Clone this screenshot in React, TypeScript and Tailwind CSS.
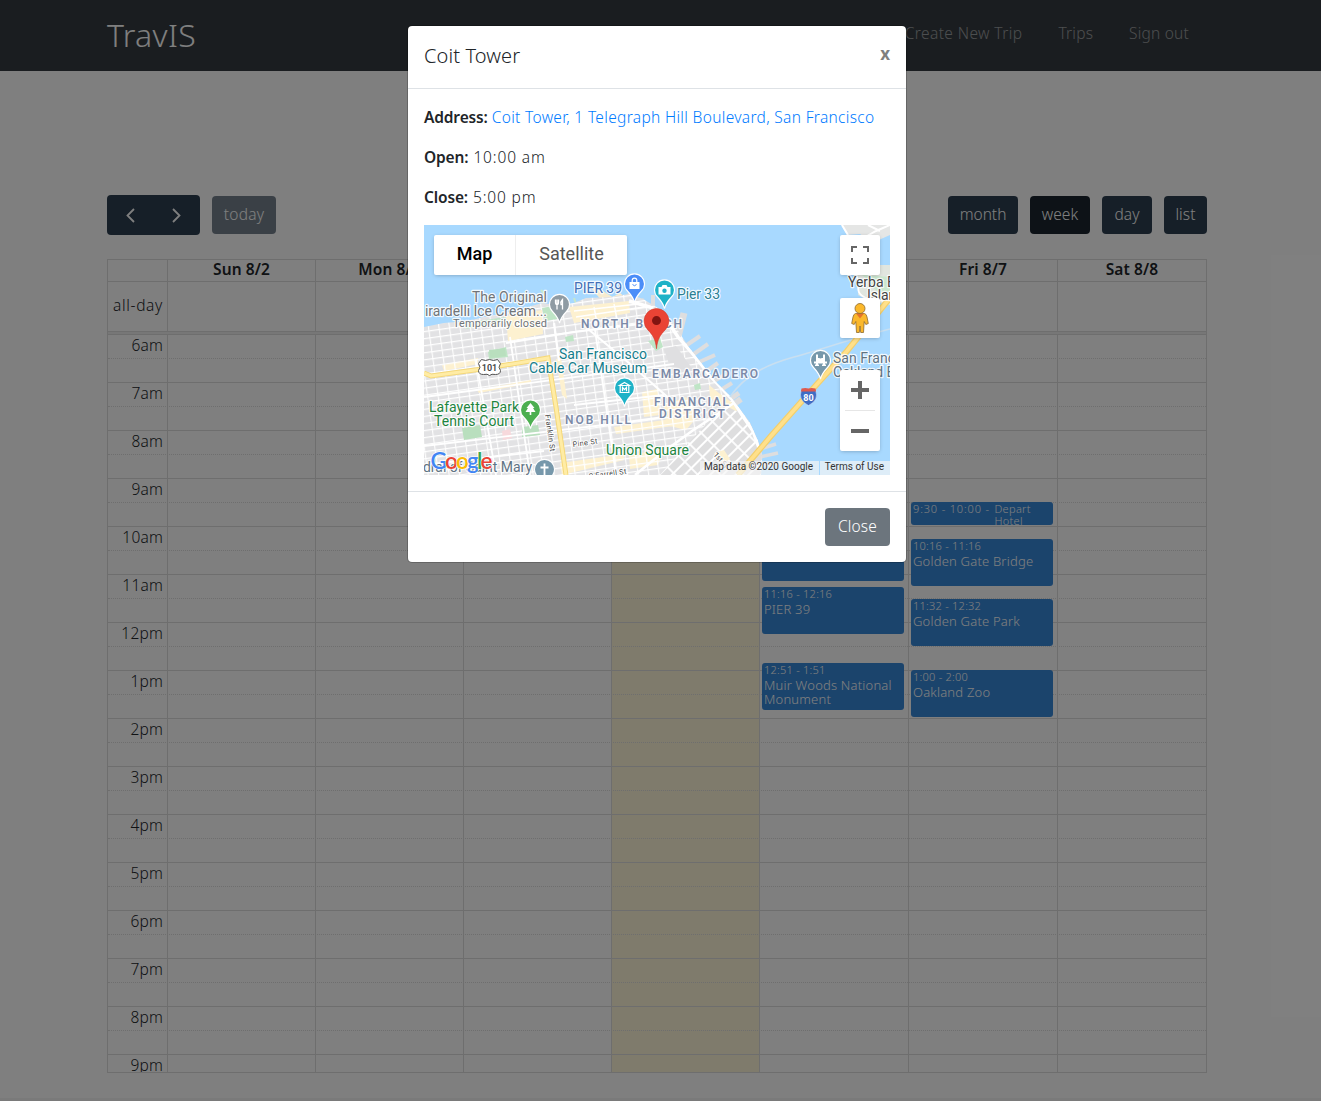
import React from "react";

const hours = ["6am", "7am", "8am", "9am", "10am", "11am", "12pm", "1pm", "2pm", "3pm", "4pm", "5pm", "6pm", "7pm", "8pm", "9pm"];
const days = ["Sun 8/2", "Mon 8/3", "Tue 8/4", "Wed 8/5", "Thu 8/6", "Fri 8/7", "Sat 8/8"];
const COLS = "grid grid-cols-[60px_148px_148px_148px_148px_149px_149px_149px]";

type Ev = { top: number; height?: number; time: string; title: string };
const events: Record<number, Ev[]> = {
  4: [
    { top: 200, time: "10:00 - 11:00", title: "Coit Tower" },
    { top: 253, time: "11:16 - 12:16", title: "PIER 39" },
    { top: 329, time: "12:51 - 1:51", title: "Muir Woods National Monument" },
  ],
  5: [
    { top: 168, height: 23, time: "9:30 - 10:00", title: "Depart Hotel" },
    { top: 205, time: "10:16 - 11:16", title: "Golden Gate Bridge" },
    { top: 265, time: "11:32 - 12:32", title: "Golden Gate Park" },
    { top: 336, time: "1:00 - 2:00", title: "Oakland Zoo" },
  ],
};

function EventBox({ e }: { e: Ev }) {
  const short = e.height !== undefined;
  return (
    <div
      className="absolute left-[2px] w-[142px] overflow-hidden rounded-[3px] bg-[#3788d8] px-[2px] text-white"
      style={{ top: e.top, height: e.height ?? 47 }}
    >
      {short ? (
        <div className="flex pt-px text-[11px] leading-[12px]">
          <span className="w-[81.5px] shrink-0 whitespace-pre tracking-[0.85px]">{e.time} - </span>
          <span className="w-10 tracking-[0.3px]">{e.title}</span>
        </div>
      ) : (
        <>
          <div className="text-[11px] leading-[13px] tracking-[0.25px]">{e.time}</div>
          <div className="pt-[2px] text-[13px] leading-[14px] tracking-[0.2px]">{e.title}</div>
        </>
      )}
    </div>
  );
}

function Calendar() {
  return (
    <div className="mt-6 w-[1100px] border border-[#ddd] text-[#212529]">
      <div className={`${COLS} -ml-px h-[21px]`}>
        <div />
        {days.map((d) => (
          <div key={d} className="border-l border-[#ddd] text-center font-semibold leading-[19px] tracking-[0.1px]">{d}</div>
        ))}
      </div>
      <div className={`${COLS} -ml-px h-[50px] border-t border-[#ddd]`}>
        <div className="pr-1 text-right leading-[47px] tracking-[0.65px]">all-day</div>
        {days.map((d) => (
          <div key={d} className={d === "Wed 8/5" ? "border-l border-[#ddd] bg-[#fff6d8]" : "border-l border-[#ddd]"} />
        ))}
      </div>
      <div className="h-[3px] border-t border-[#ddd] bg-[#eee]" />
      <div className="relative h-[738px] overflow-hidden">
        <div className={`absolute inset-0 -left-px ${COLS}`}>
          <div />
          {days.map((d) => (
            <div key={d} className={d === "Wed 8/5" ? "border-l border-[#ddd] bg-[#fff6d8]" : "border-l border-[#ddd]"} />
          ))}
        </div>
        <div className="relative">
          {hours.map((h) => (
            <div key={h} className="h-12 border-t border-[#ddd]">
              <div className="h-[23px] w-[55px] text-right leading-[21px] tracking-[0.2px]">{h}</div>
              <div className="h-6 border-t border-dotted border-[#ddd]" />
            </div>
          ))}
        </div>
        <div className={`absolute inset-0 -left-px ${COLS}`}>
          <div />
          {days.map((d, i) => (
            <div key={d} className="relative border-l border-transparent">
              {(events[i] ?? []).map((e) => <EventBox key={e.time} e={e} />)}
            </div>
          ))}
        </div>
      </div>
    </div>
  );
}

type LabelProps = { x: number; y: number; w: number; children: string; size?: number; fill?: string; rot?: number; weight?: number };
function Label({ x, y, w, children, size = 14, fill = "#5f6368", rot = 0, weight = 400 }: LabelProps) {
  return (
    <text
      x={x} y={y} textLength={w} fontSize={size} fontWeight={weight} fill={fill}
      stroke="#fff" strokeWidth="2.4" strokeOpacity=".85" strokeLinejoin="round" paintOrder="stroke"
      transform={rot ? `rotate(${rot} ${x} ${y})` : undefined}
    >
      {children}
    </text>
  );
}

function Pin({ x, y, fill, children }: { x: number; y: number; fill: string; children?: React.ReactNode }) {
  return (
    <g transform={`translate(${x} ${y})`}>
      <path d="M0 18.5C-1.2 13.5-3.6 10.6-7 7A10 10 0 1 1 7 7C3.6 10.6 1.2 13.5 0 18.5Z" fill={fill} stroke="#fff" strokeWidth="1.1" />
      {children}
    </g>
  );
}

function MapDrawing() {
  const piers: [number, number, number, number, number][] = [
    [260, 122, 276, 111, 4], [267, 131, 284, 119, 4], [273, 138, 291, 130, 4], [280, 148, 294, 138, 4], [285, 159, 302, 149, 4],
    [292, 168, 308, 158, 4], [301, 178, 315, 168, 5], [306, 182, 317, 174, 6], [336, 224, 352, 219, 3.5], [336, 232, 354, 228, 3.5], [338, 240, 358, 238, 3.5],
    [254, 112, 260, 88, 7], [229, 82, 229, 70, 4],
  ];
  return (
    <svg width="466" height="250" viewBox="0 0 466 250" className="block" style={{ fontFamily: "Roboto, sans-serif" }}>
      <defs>
        <pattern id="streets" width="10.4" height="7" patternUnits="userSpaceOnUse" patternTransform="rotate(-8)">
          <rect width="10.4" height="7" fill="#e2e2e4" />
          <path d="M0 .6H10.4M.6 0V7" stroke="#fff" strokeWidth="1.1" />
        </pattern>
        <pattern id="downtown" width="10.4" height="7" patternUnits="userSpaceOnUse" patternTransform="rotate(-8)">
          <rect width="10.4" height="7" fill="#fdf1d0" />
          <path d="M0 .6H10.4M.6 0V7" stroke="#fff" strokeWidth="1.4" />
        </pattern>
        <pattern id="soma" width="16" height="9" patternUnits="userSpaceOnUse" patternTransform="rotate(-45)">
          <rect width="16" height="9" fill="#dededf" />
          <path d="M0 1H16M1 0V9" stroke="#fff" strokeWidth="1.8" />
        </pattern>
        <clipPath id="land">
          <path d="M0 102L20 98L44 96L60 92L82 88L104 82L118 78L133 80L150 78L162 73L187 72L205 69L219 74L229 80L241 87L253 104L264 121L278 139L292 157L306 171L316 184L326 198L334 216L338 230L337 250H0Z" />
        </clipPath>
      </defs>
      <rect width="466" height="250" fill="#a8d9ff" />
      <g stroke="#dededf">
        {piers.map(([a, b, c, d, w], i) => <line key={i} x1={a} y1={b} x2={c} y2={d} strokeWidth={w} />)}
      </g>
      <path d="M118 82C121 74 122 69 117 65M152 79L150 73" fill="none" stroke="#c7e8cc" strokeWidth="2" />
      <path d="M148 59L158 58L168 64L178 76L190 73L171 61ZM183 75L196 68L207 77Z" fill="#f7ecd0" />
      <path d="M200 76L205 66L212 79ZM213 78L219 73L228 84Z" fill="#dcdcde" />
      <g clipPath="url(#land)">
        <rect y="50" width="466" height="200" fill="url(#streets)" />
        <path d="M145 82L205 76L206 88L150 98ZM82 91L118 85L119 109L84 116Z" fill="#fdf1d0" />
        <path d="M152 92L220 82M150 86L215 79M170 82L173 98M190 79L193 94" stroke="#fff" strokeWidth="1.4" />
        <path d="M40 98L82 92L82 96L42 104ZM64 127L82 122L84 132L65 134ZM141 112L149 110L150 116L142 117ZM118 83L134 80L133 94L121 96ZM270 160L276 158L277 164L271 165Z" fill="#bfe5c6" />
        <path d="M18 140L54 133L54 139L20 146ZM218 167L234 164L236 190L220 192ZM190 202L262 192L263 199L192 209ZM240 180L262 172L275 190L262 205L242 200ZM136 238L200 229V235L138 250ZM205 230L240 224L234 240L206 244Z" fill="url(#downtown)" />
        <path d="M132 134L137 133L143 174L138 170ZM53 165L107 155V158L55 168ZM285 160L300 172L314 182L309 194L286 172Z" fill="#fdf1d0" />
        <path d="M38 203L56 200L58 212L40 215ZM98 202L114 200L116 210L98 212ZM65 125L81 123L82 131L66 133Z" fill="#b9dfbe" />
        <path d="M78 206L86 204L88 213L79 215Z" fill="#f7d9dc" />
        <path d="M224 116L236 113L239 122L232 126Z" fill="#bfe5c6" />
        <path d="M240 124L252 121L270 146L246 142Z" fill="#dfdfe1" />
        <path d="M236 250L266 216L300 180L340 200V250Z" fill="url(#soma)" />
        <path d="M290 228L300 225L306 234L296 240Z" fill="#fdf1d0" />
        <path d="M0 172L60 164L250 139M52 135L72 250M86 112L106 250M0 221L180 200L240 192M170 98L192 250M150 180L240 170M0 240L120 226" fill="none" stroke="#fff" strokeWidth="1.8" />
        <path d="M82 118L150 107L225 98M164 104L205 138L248 176M130 98L135 136" fill="none" stroke="#fff" strokeWidth="2.2" />
        <path d="M211 250L238 228L268 206L310 178" fill="none" stroke="#fff" strokeWidth="2.6" />
        <path d="M205 76L226 82L242 94L254 112L268 128L288 153L308 174L318 190L329 206L336 226" fill="none" stroke="#fff" strokeWidth="3.4" />
        <path d="M0 148L7 151L58 144L124 133L132 182L142 250" fill="none" stroke="#f5d879" strokeWidth="5" />
        <path d="M0 148L7 151L58 144L124 133L132 182L142 250" fill="none" stroke="#ffeca5" strokeWidth="3" />
      </g>
      <path d="M306 172C322 148 348 138 370 132S420 116 466 104" fill="none" stroke="#c9dff0" strokeWidth="1.6" />
      <path d="M417 0L423 10L436 9L448 18L466 10V0Z" fill="#e5e6e5" />
      <path d="M418 0L424 10M438 14L452 6L466 0M444 0L456 6" fill="none" stroke="#fff" strokeWidth="2" />
      <path d="M428 44L436 55L434 70L446 76L466 80V40H440Z" fill="#e1e6df" />
      <path d="M438 50C448 58 450 70 466 70V52Z" fill="#cbe8cf" />
      <path d="M430 48C440 58 427 66 442 73L466 77" fill="none" stroke="#fff" strokeWidth="1.8" />
      <path d="M466 73L423 126L394 158L347 211L314 250" fill="none" stroke="#f3cf6c" strokeWidth="6" />
      <path d="M466 73L423 126L394 158L347 211L314 250" fill="none" stroke="#ffe08a" strokeWidth="3.6" />

      <g transform="translate(65.5 142.5)">
        <path d="M-8-8Q-4-6 0-8Q4-6 8-8L11-4Q8 0 11 3Q11 7 6 7Q2 6 0 8Q-2 6-6 7Q-11 7-11 3Q-8 0-11-4Z" fill="#fff" stroke="#555" />
        <text y="3.4" textAnchor="middle" fontSize="9" fontWeight="600" fill="#444">101</text>
      </g>
      <g transform="translate(384.5 171)">
        <path d="M-7-6H7Q11 4 0 9.500Q-11 4-7-6Z" fill="#3f6dc4" stroke="#fff" strokeWidth=".4" />
        <path d="M-7-7.500Q-3-8.500 0-7.500Q3-8.500 7-7.500L7.600-4.600H-7.600Z" fill="#dd5a4e" />
        <text y="4.600" textAnchor="middle" fontSize="9" fontWeight="700" fill="#fff">80</text>
      </g>

      <Label x={150} y={68} w={48} fill="#4470b8">PIER 39</Label>
      <Label x={253} y={74} w={43} fill="#2a7f93">Pier 33</Label>
      <Label x={48} y={77} w={75} fill="#707478">The Original</Label>
      <Label x={1} y={91} w={122} fill="#707478">irardelli Ice Cream...</Label>
      <Label x={29} y={102} w={94} size={11} fill="#707478">Temporarily closed</Label>
      <Label x={157} y={103} w={101} size={12} weight={600} fill="#7c8aa8">NORTH BEACH</Label>
      <Label x={228} y={153} w={106} size={12} weight={600} fill="#7c8aa8">EMBARCADERO</Label>
      <Label x={230} y={181} w={75} size={12} weight={600} fill="#7c8aa8">FINANCIAL</Label>
      <Label x={235} y={193} w={66} size={12} weight={600} fill="#7c8aa8">DISTRICT</Label>
      <Label x={141} y={199} w={66} size={12} weight={600} fill="#7c8aa8">NOB HILL</Label>
      <Label x={135} y={134} w={88} fill="#147d8c">San Francisco</Label>
      <Label x={105} y={148} w={118} fill="#147d8c">Cable Car Museum</Label>
      <Label x={5} y={187} w={90} fill="#1e8540">Lafayette Park</Label>
      <Label x={10} y={201} w={80} fill="#1e8540">Tennis Court</Label>
      <Label x={182} y={230} w={83} fill="#1e8540">Union Square</Label>
      <Label x={-1} y={247} w={109} fill="#5f7383">dral of Saint Mary</Label>
      <Label x={409} y={138} w={88} fill="#5f7383">San Francisco</Label>
      <Label x={409} y={152} w={76} fill="#5f7383">Oakland Bay</Label>
      <Label x={424} y={62} w={78} fill="#444">Yerba Buena</Label>
      <Label x={443} y={75} w={37} fill="#444">Island</Label>
      <Label x={149} y={222} w={25} size={7.5} rot={-8} fill="#444">Pine St</Label>
      <Label x={165} y={254} w={38} size={7.5} rot={-8} fill="#444">O'Farrell St</Label>
      <Label x={121} y={190} w={37} size={7.5} rot={82} fill="#444">Franklin St</Label>
      <Label x={289} y={230} w={18} size={7.5} rot={48} fill="#444">1st St</Label>

      <Pin x={135.5} y={79.5} fill="#8f9ba3">
        <path d="M-4-5V-2Q-4 0-2.5 0T-1-2V-5M-2.5-5V5M3-5Q1-3 1.5 0H3ZM3-5V5" fill="none" stroke="#fff" strokeWidth="1.3" />
      </Pin>
      <Pin x={210.5} y={59} fill="#4b8df8">
        <path d="M-5-2H5V5H-5Z" fill="#fff" />
        <path d="M-2.3-2V-3.5A2.3 2.3 0 0 1 2.3-3.5V-2" fill="none" stroke="#fff" strokeWidth="1.2" />
        <path d="M-2 .5Q0 3 2 .5" fill="none" stroke="#4b8df8" />
      </Pin>
      <Pin x={240.5} y={65} fill="#1fb2c7">
        <path d="M-6-3H-3L-2-5H2L3-3H6V4.5H-6Z" fill="#fff" />
        <circle cx="0" cy=".8" r="2.2" fill="#1fb2c7" />
      </Pin>
      <Pin x={200.5} y={163} fill="#1fb2c7">
        <path d="M0-5.500L5-2.500H-5ZM-5 4.500H5M-4.300-2V4M4.300-2V4" fill="none" stroke="#fff" strokeWidth="1.200" />
        <path d="M-2 3.300V-.6L0 1.600L2-.6V3.300" fill="none" stroke="#fff" strokeWidth="1.200" />
      </Pin>
      <Pin x={106.5} y={185} fill="#4caf50">
        <path d="M0-7L4-2H2.5L5 2H.8V5H-.8V2H-5L-2.5-2H-4Z" fill="#fff" />
      </Pin>
      <Pin x={120.5} y={244.5} fill="#7798ab">
        <path d="M0-6V6M-4-2H4" stroke="#fff" strokeWidth="1.8" />
      </Pin>
      <Pin x={396.5} y={135.5} fill="#7798ab">
        <path d="M-6.500 1H6.500V3H-6.500ZM-4.500-6H-2.500V5.500H-4.500ZM2.500-6H4.500V5.500H2.500ZM-5.500 4H-1.500V5.500H-5.500ZM1.500 4H5.500V5.500H1.500ZM-3-4Q0 0 3-4V1H-3Z" fill="#fff" />
      </Pin>
      <path d="M232.500 123.700C231.600 113.500 228.200 109.500 223.900 104.900A12.400 12.400 0 1 1 241.100 104.900C236.800 109.500 233.400 113.500 232.500 123.700Z" fill="#ea4335" stroke="#d23a2e" strokeWidth=".6" />
      <circle cx="232.500" cy="95.600" r="4.500" fill="#811411" />

      <text x="6.500" y="243.500" textLength="62" fontSize="22.500" fontWeight="600" stroke="#fff" strokeWidth="1.600" strokeOpacity=".8" paintOrder="stroke" style={{ fontFamily: "Lato, sans-serif" }}>
        <tspan fill="#4285f4">G</tspan><tspan fill="#ea4335">o</tspan><tspan fill="#fbbc05">o</tspan><tspan fill="#4285f4">g</tspan><tspan fill="#34a853">l</tspan><tspan fill="#ea4335">e</tspan>
      </text>
    </svg>
  );
}

const Strong = ({ children }: { children: string }) => <span className="font-semibold tracking-[-0.15px]">{children}</span>;

function MapPanel() {
  const box = "absolute bg-white rounded-[2px] shadow-[0_1px_4px_-1px_rgba(0,0,0,0.3)] flex items-center justify-center";
  return (
    <div className="relative h-[250px] w-[466px] overflow-hidden font-[Roboto,sans-serif] font-normal">
      <MapDrawing />
      <div className="absolute left-[10px] top-[10px] flex h-10 rounded-[2px] bg-white text-[18px] leading-[38px] shadow-[0_1px_4px_-1px_rgba(0,0,0,0.3)]">
        <div className="w-[82px] border-r border-[#eee] text-center font-medium text-black">Map</div>
        <div className="w-[111px] text-center text-[#565656]">Satellite</div>
      </div>
      <div className={`${box} right-[10px] top-[10px] size-10`}>
        <svg width="18" height="18" viewBox="0 0 18 18" fill="#666"><path d="M0 0V6H2V2H6V0ZM16 0H12V2H16V6H18V0ZM16 16H12V18H18V12H16ZM2 12H0V18H6V16H2Z" /></svg>
      </div>
      <div className={`${box} right-[10px] top-[73px] size-10`}>
        <svg width="20" height="32" viewBox="0 0 20 32">
          <path d="M5.500 11.500H14.500Q16.500 12 17 15L18.300 21.500L15.800 22.500L14.200 19.500L13.500 30.500H10.700L10 24L9.300 30.500H6.500L5.800 19.500L4.200 22.500L1.700 21.500L3 15Q3.500 12 5.500 11.500Z" fill="#fbb82b" stroke="#8d6a2e" strokeWidth=".8" />
          <path d="M6 11.500H14L10 16.500Z" fill="#e5722b" />
          <circle cx="10" cy="6.500" r="5" fill="#fbb82b" stroke="#8d6a2e" strokeWidth=".8" />
        </svg>
      </div>
      <div className={`${box} right-[10px] top-[145px] h-[81px] w-10 flex-col`}>
        <div className="flex h-10 items-center"><svg width="18" height="18" viewBox="0 0 18 18"><path d="M0 9H18M9 0V18" stroke="#666" strokeWidth="4" /></svg></div>
        <div className="h-px w-[30px] bg-[#e6e6e6]" />
        <div className="flex h-10 items-center"><svg width="18" height="18" viewBox="0 0 18 18"><path d="M0 9H18" stroke="#666" strokeWidth="4" /></svg></div>
      </div>
      <div className="absolute bottom-0 right-0 flex h-[14px] text-[10px] leading-[12px] text-[#333]">
        <div className="mr-px w-[119px] bg-[#f5f5f5]/70 pr-[6px] text-right">Map data ©2020 Google</div>
        <div className="w-[70px] bg-[#f5f5f5]/70 pr-[6px] text-right">Terms of Use</div>
      </div>
    </div>
  );
}

function Modal() {
  return (
    <div className="absolute left-[407px] top-[25px] w-[500px] rounded-[5px] border border-black/20 bg-white bg-clip-padding text-[#212529]">
      <div className="flex h-[63px] justify-between border-b border-[#dee2e6] px-4 pt-[15px]">
        <h5 className="text-[20px] leading-[30px] tracking-[0.1px]">Coit Tower</h5>
        <span className="text-[17px] font-bold leading-[26px] text-[#7f7f7f]">x</span>
      </div>
      <div className="flex flex-col gap-4 p-4 leading-[24px] [&>p]:h-6">
        <p className="whitespace-nowrap"><Strong>Address:</Strong> <a className="tracking-[0.32px] text-[#007bff]">Coit Tower, 1 Telegraph Hill Boulevard, San Francisco</a></p>
        <p><Strong>Open:</Strong> <span className="ml-px tracking-[0.85px]">10:00 am</span></p>
        <p><Strong>Close:</Strong> <span className="ml-px tracking-[0.85px]">5:00 pm</span></p>
        <MapPanel />
      </div>
      <div className="flex h-[71px] justify-end border-t border-[#dee2e6] p-4">
        <button className="h-[38px] w-[65px] rounded-[4px] bg-[#6c757d] tracking-[0.15px] text-white">Close</button>
      </div>
    </div>
  );
}

export default function App() {
  const btn = "flex h-[38px] items-center justify-center rounded-[4px] pb-px text-white";
  return (
    <div className="relative h-[1101px] w-[1321px] overflow-hidden bg-white font-['Noto_Sans',sans-serif] text-[15.5px] font-[350]">
      <nav className="flex h-[71px] justify-between bg-[#343a40] px-[107px]">
        <div className="text-[32px] font-light leading-[69px] tracking-[0.35px] text-white">TravIS</div>
        <div className="flex gap-9 pr-[25px] leading-[67px] text-white/50">
          <span className="tracking-[0.4px]">Create New Trip</span>
          <span className="tracking-[0.2px]">Trips</span>
          <span className="tracking-[0.2px]">Sign out</span>
        </div>
      </nav>
      <main className="ml-[107px] w-[1100px] pt-[124px]">
        <div className="flex h-10 items-center justify-between">
          <div className="flex items-center gap-3">
            <div className="flex h-10 w-[93px] items-center justify-center gap-[30px] rounded-[4px] bg-[#2c3e50]">
              {["M11 3L4.500 9.500L11 16", "M4 3L10.500 9.500L4 16"].map((d) => (
                <svg key={d} width="16" height="18" viewBox="0 0 16 18" fill="none" stroke="#fff" strokeWidth="1.800"><path d={d} /></svg>
              ))}
            </div>
            <div className={`${btn} w-16 bg-[#2c3e50] tracking-[0.2px] opacity-65`}>today</div>
          </div>
          <div className="flex gap-3">
            <div className={`${btn} w-[70px] bg-[#2c3e50]`}>month</div>
            <div className={`${btn} w-[60px] bg-[#1a252f] tracking-[0.1px]`}>week</div>
            <div className={`${btn} w-[50px] bg-[#2c3e50] tracking-[0.1px]`}>day</div>
            <div className={`${btn} w-[43px] bg-[#2c3e50] tracking-[0.1px]`}>list</div>
          </div>
        </div>
        <Calendar />
        <div className="-ml-[107px] mt-[25px] h-[3px] w-[1321px] bg-[#f4f4f4]" />
      </main>
      <div className="absolute inset-0 bg-black/50" />
      <Modal />
    </div>
  );
}
